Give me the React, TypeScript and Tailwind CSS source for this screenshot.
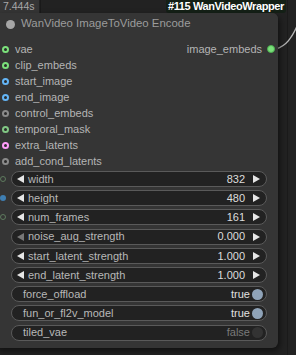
import React from 'react';

type Slot = { name: string; color: string };

const inputs: Slot[] = [
  { name: 'vae', color: '#7be07b' },
  { name: 'clip_embeds', color: '#7be07b' },
  { name: 'start_image', color: '#64b5f6' },
  { name: 'end_image', color: '#64b5f6' },
  { name: 'control_embeds', color: '#8a8a8a' },
  { name: 'temporal_mask', color: '#81c784' },
  { name: 'extra_latents', color: '#ff9cf9' },
  { name: 'add_cond_latents', color: '#8a8a8a' },
];

type Widget =
  | { kind: 'num'; name: string; value: string; dot?: 'hollow' | 'blue'; minned?: boolean }
  | { kind: 'toggle'; name: string; on: boolean };

const widgets: Widget[] = [
  { kind: 'num', name: 'width', value: '832', dot: 'hollow' },
  { kind: 'num', name: 'height', value: '480', dot: 'blue' },
  { kind: 'num', name: 'num_frames', value: '161', dot: 'hollow' },
  { kind: 'num', name: 'noise_aug_strength', value: '0.000', minned: true },
  { kind: 'num', name: 'start_latent_strength', value: '1.000' },
  { kind: 'num', name: 'end_latent_strength', value: '1.000' },
  { kind: 'toggle', name: 'force_offload', on: true },
  { kind: 'toggle', name: 'fun_or_fl2v_model', on: true },
  { kind: 'toggle', name: 'tiled_vae', on: false },
];

function SlotDot({ color }: { color: string }) {
  return (
    <span className="w-[7px] h-[7px] rounded-full border-[2px] shrink-0" style={{ borderColor: color, backgroundColor: '#2a2a2a' }} />
  );
}

function Arrow({ dir, dim }: { dir: 'left' | 'right'; dim?: boolean }) {
  return (
    <svg width="7" height="8" viewBox="0 0 7 8" className="shrink-0">
      <polygon points={dir === 'left' ? '7,0 7,8 0,4' : '0,0 0,8 7,4'} fill={dim ? '#777' : '#e6e6e6'} />
    </svg>
  );
}

export default function App() {
  return (
    <div className="relative w-[296px] h-[355px] overflow-hidden bg-[#222222]" style={{ fontFamily: '"Liberation Sans", Arial, sans-serif' }}>
      {/* canvas grid lines */}
      <div className="absolute left-[40px] top-0 w-px h-[13px] bg-[#1a1a1a]" />
      <div className="absolute left-[287px] top-0 w-px h-full bg-[#1b1b1b]" />

      {/* execution time */}
      <div className="absolute left-0 top-0 h-[13px] w-[39px] bg-[#353535] text-[10.5px] leading-[13px] text-[#a8a8a8] pl-[3px]">7.444s</div>

      {/* node badge */}
      <div className="absolute left-[166px] top-0 h-[13px] px-[2px] rounded-b-[3px] bg-[#142016] text-[11px] leading-[12px] font-bold text-white tracking-[-0.4px]">
        #115 WanVideoWrapper
      </div>
      <div className="absolute left-[221px] top-[14px] w-[3px] h-[1px] bg-[#ddd]" />

      {/* link leaving output */}
      <svg className="absolute left-0 top-0" width="296" height="355">
        <path d="M276 49 C 286 46, 292 38, 298 24" stroke="#b5b5b5" strokeWidth="1.4" fill="none" />
      </svg>

      {/* node */}
      <div className="absolute left-[-6px] top-[13px] w-[284px] h-[335px] rounded-[6px] bg-[#353535] shadow-[2px_3px_6px_rgba(0,0,0,0.5)]">
        <div className="h-[22px] flex items-center pl-[11px] gap-[6px] rounded-t-[6px] bg-[#353535]">
          <span className="w-[9px] h-[9px] rounded-full bg-[#a6a6a6] ml-[1px]" />
          <span className="text-[11.4px] text-[#9c9c9c] whitespace-nowrap">WanVideo ImageToVideo Encode</span>
        </div>

        <div className="pt-[6px] relative">
          {inputs.map((s, i) => (
            <div key={s.name} className="h-[16px] flex items-center pl-[8px] gap-[6px]">
              <SlotDot color={s.color} />
              <span className="text-[11px] text-[#b4b4b4]">{s.name}</span>
              {i === 0 && (
                <div className="ml-auto flex items-center gap-[5px] pr-[3px]">
                  <span className="text-[11px] text-[#b4b4b4]">image_embeds</span>
                  <span className="w-[8px] h-[8px] rounded-full bg-[#7be07b] border border-[#4caf50]" />
                </div>
              )}
            </div>
          ))}
        </div>

        <div className="mt-[2px] flex flex-col gap-[3.2px]">
          {widgets.map((w) => (
            <div key={w.name} className="h-[16px] flex items-center">
              <div className="w-[17px] flex justify-center shrink-0">
                {w.kind === 'num' && w.dot === 'hollow' && (
                  <span className="w-[6px] h-[6px] rounded-full border border-[#5e7a5e]" />
                )}
                {w.kind === 'num' && w.dot === 'blue' && (
                  <span className="w-[6px] h-[6px] rounded-full bg-[#3f7fb3]" />
                )}
              </div>
              <div className="h-[16px] w-[256px] rounded-full border border-[#5a5a5a] bg-[#222222] flex items-center">
                {w.kind === 'num' ? (
                  <>
                    <span className="ml-[5px]"><Arrow dir="left" dim={w.minned} /></span>
                    <span className="ml-[4px] text-[11px] text-[#b8b8b8] whitespace-nowrap">{w.name}</span>
                    <span className="ml-auto text-[11px] text-[#dddddd]">{w.value}</span>
                    <span className="ml-[8px] mr-[6px]"><Arrow dir="right" /></span>
                  </>
                ) : (
                  <>
                    <span className="ml-[11px] text-[11px] text-[#b8b8b8] whitespace-nowrap">{w.name}</span>
                    <span className={`ml-auto text-[11px] ${w.on ? 'text-[#e0e0e0]' : 'text-[#7a7a7a]'}`}>{w.on ? 'true' : 'false'}</span>
                    <span className={`ml-[2px] mr-[3px] w-[11px] h-[11px] rounded-full ${w.on ? 'bg-[#8fa3b8]' : 'bg-[#333333]'}`} />
                  </>
                )}
              </div>
            </div>
          ))}
        </div>
      </div>
    </div>
  );
}
